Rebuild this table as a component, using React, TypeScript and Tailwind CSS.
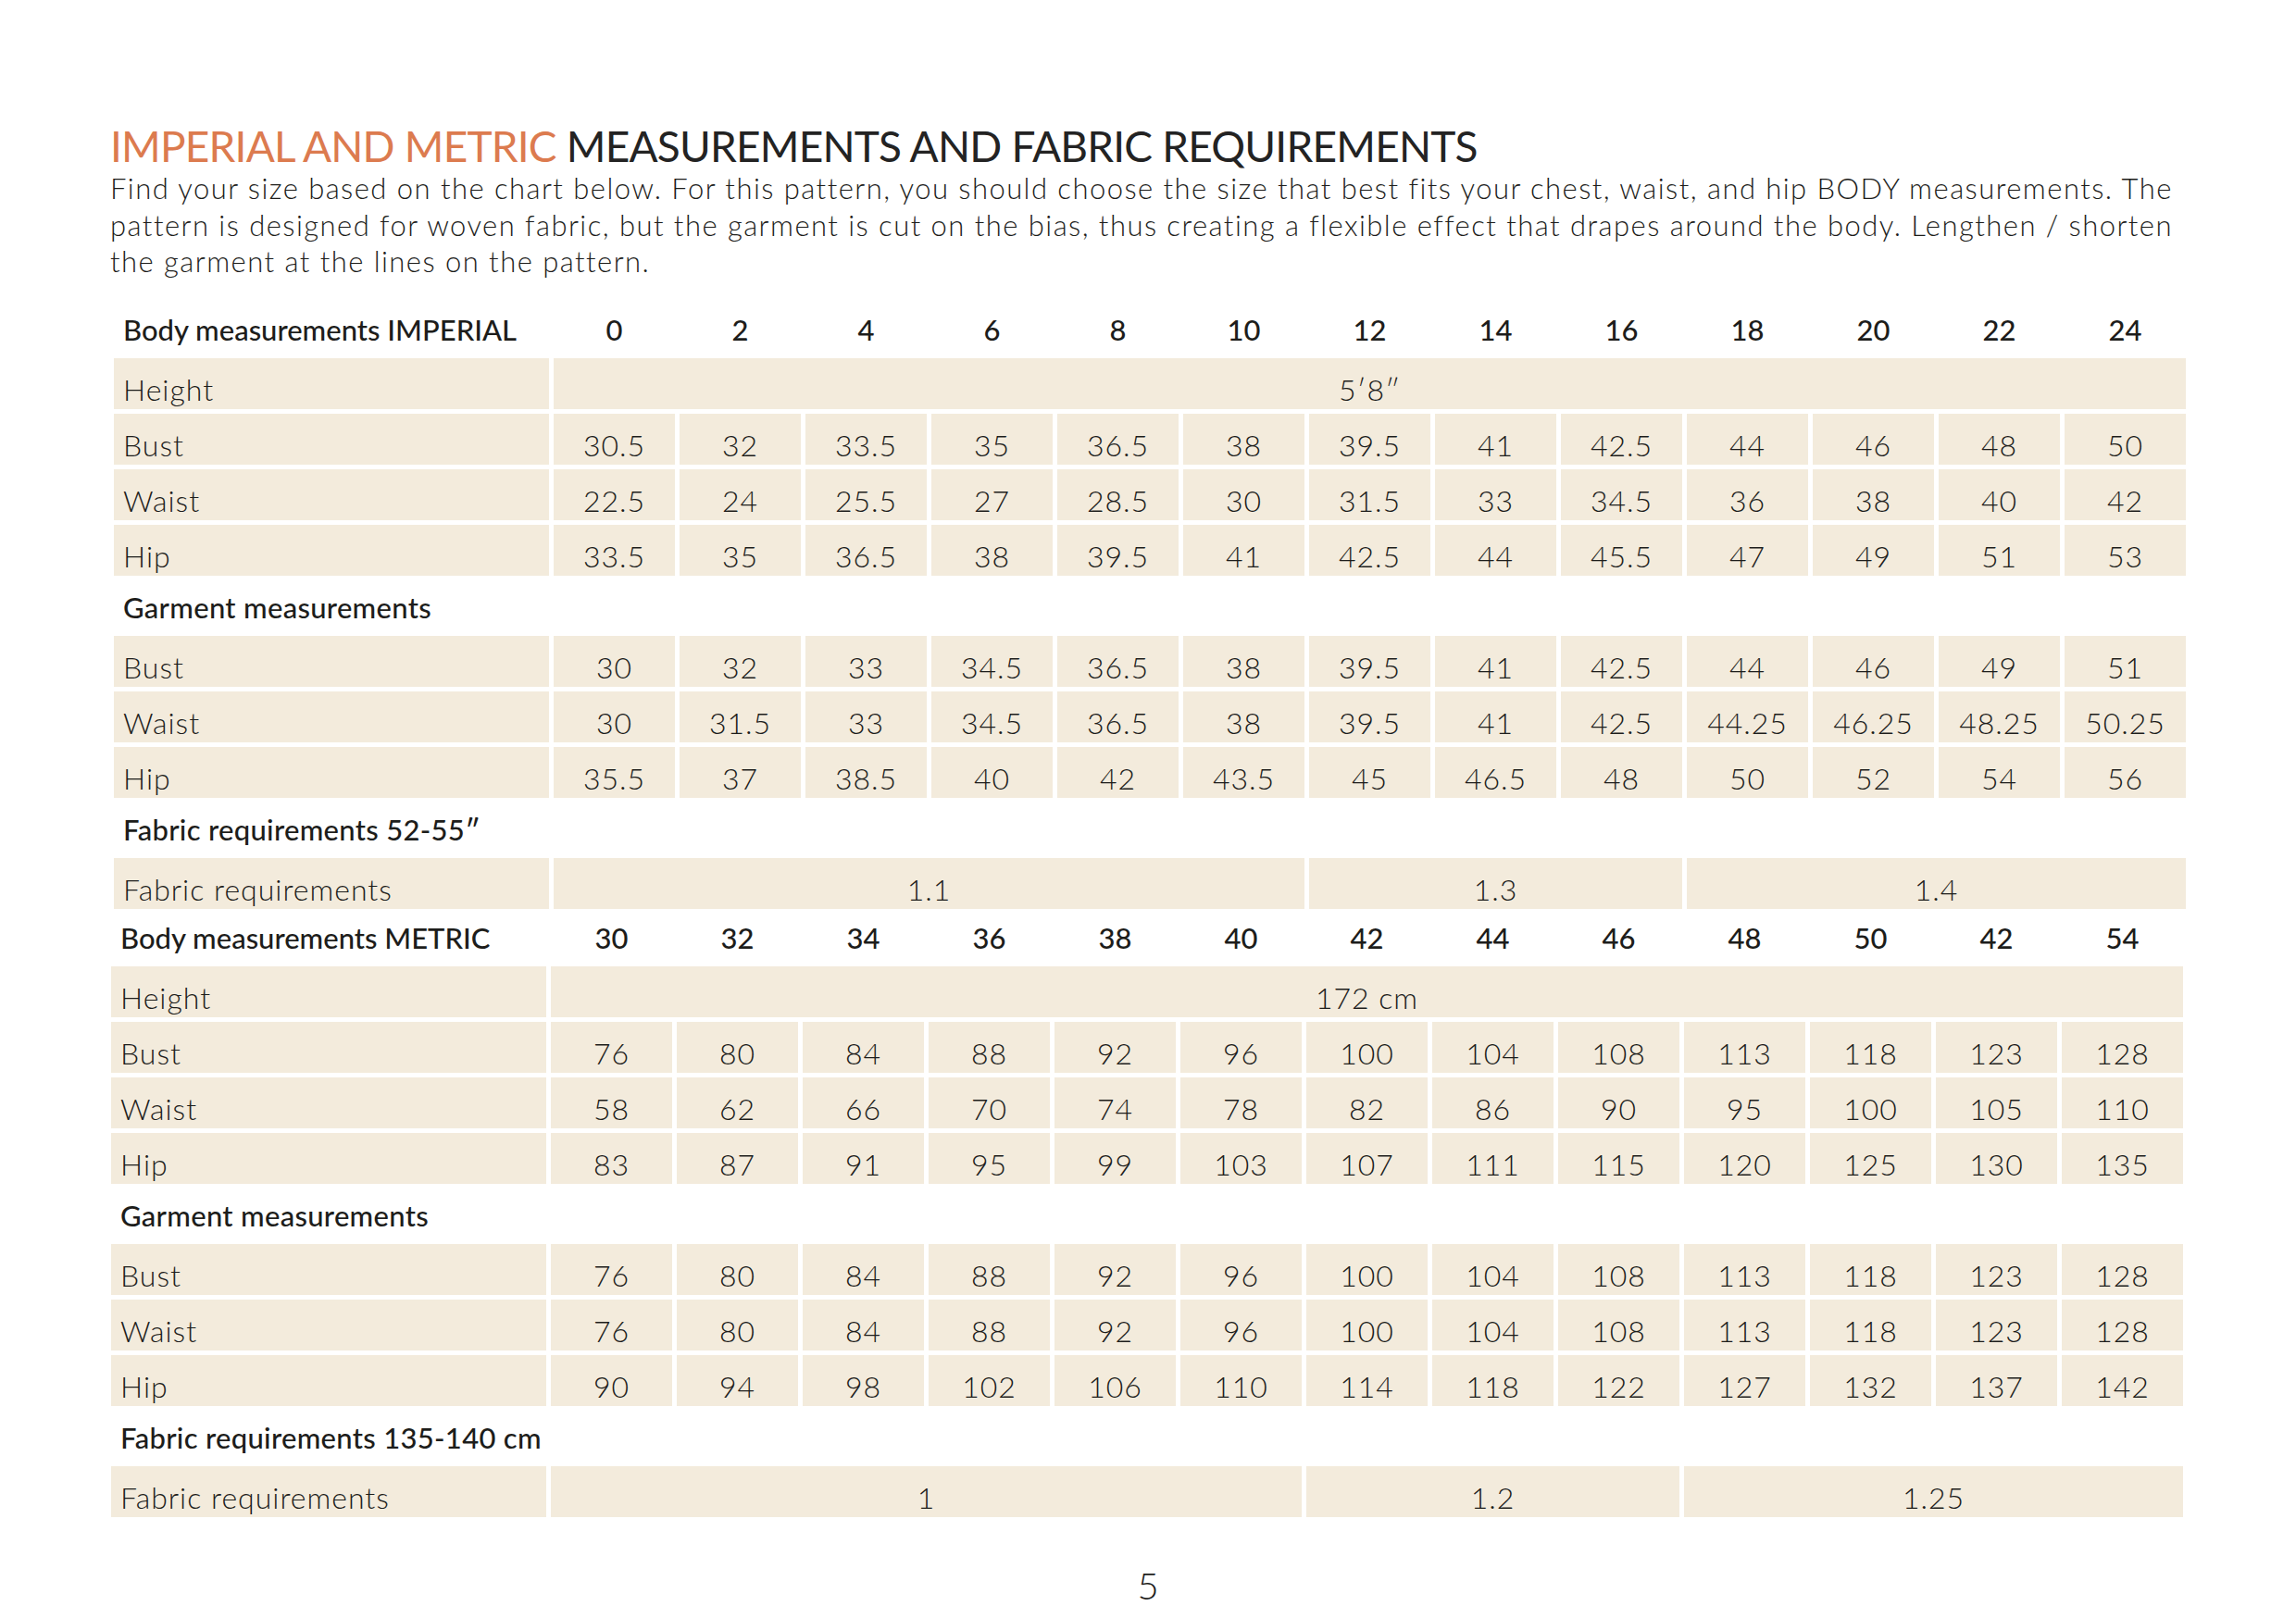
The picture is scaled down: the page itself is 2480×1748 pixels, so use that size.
const SIZES_IMP = ['0', '2', '4', '6', '8', '10', '12', '14', '16', '18', '20', '22', '24'];
const SIZES_MET = ['30', '32', '34', '36', '38', '40', '42', '44', '46', '48', '50', '42', '54'];

const imperial = {
  body: [
    ['Bust', ['30.5', '32', '33.5', '35', '36.5', '38', '39.5', '41', '42.5', '44', '46', '48', '50']],
    ['Waist', ['22.5', '24', '25.5', '27', '28.5', '30', '31.5', '33', '34.5', '36', '38', '40', '42']],
    ['Hip', ['33.5', '35', '36.5', '38', '39.5', '41', '42.5', '44', '45.5', '47', '49', '51', '53']],
  ] as [string, string[]][],
  garment: [
    ['Bust', ['30', '32', '33', '34.5', '36.5', '38', '39.5', '41', '42.5', '44', '46', '49', '51']],
    ['Waist', ['30', '31.5', '33', '34.5', '36.5', '38', '39.5', '41', '42.5', '44.25', '46.25', '48.25', '50.25']],
    ['Hip', ['35.5', '37', '38.5', '40', '42', '43.5', '45', '46.5', '48', '50', '52', '54', '56']],
  ] as [string, string[]][],
};

const metric = {
  body: [
    ['Bust', ['76', '80', '84', '88', '92', '96', '100', '104', '108', '113', '118', '123', '128']],
    ['Waist', ['58', '62', '66', '70', '74', '78', '82', '86', '90', '95', '100', '105', '110']],
    ['Hip', ['83', '87', '91', '95', '99', '103', '107', '111', '115', '120', '125', '130', '135']],
  ] as [string, string[]][],
  garment: [
    ['Bust', ['76', '80', '84', '88', '92', '96', '100', '104', '108', '113', '118', '123', '128']],
    ['Waist', ['76', '80', '84', '88', '92', '96', '100', '104', '108', '113', '118', '123', '128']],
    ['Hip', ['90', '94', '98', '102', '106', '110', '114', '118', '122', '127', '132', '137', '142']],
  ] as [string, string[]][],
};

const grid = 'grid grid-cols-[470px_repeat(13,131px)] gap-x-[5px]';
const cell = 'bg-[#f3ebdc] h-[55px] pt-[18px] text-[32px] leading-[32px] font-light tracking-[1px] whitespace-nowrap';

function HeaderRow({ title, sizes, tall = true }: { title: string; sizes: string[]; tall?: boolean }) {
  return (
    <div className={`${grid} ${tall ? 'h-[55px] pt-[14px]' : 'h-[52px] pt-[11px]'} text-[31px] leading-[31px] font-medium`}>
      <div className="pl-[10px] whitespace-nowrap">{title}</div>
      {sizes.map((s, i) => (
        <div key={i} className="text-center">{s}</div>
      ))}
    </div>
  );
}

function Heading({ children }: { children: React.ReactNode }) {
  return (
    <div className="h-[55px] pt-[14px] pl-[10px] text-[31px] leading-[31px] font-medium tracking-[0.3px] whitespace-nowrap">
      {children}
    </div>
  );
}

function DataRow({ label, values }: { label: string; values: string[] }) {
  return (
    <div className={grid}>
      <div className={`${cell} pl-[10px]`}>{label}</div>
      {values.map((v, i) => (
        <div key={i} className={`${cell} text-center`}>{v}</div>
      ))}
    </div>
  );
}

function SpanRow({ label, value }: { label: string; value: string }) {
  return (
    <div className={grid}>
      <div className={`${cell} pl-[10px]`}>{label}</div>
      <div className={`${cell} col-span-13 text-center`}>{value}</div>
    </div>
  );
}

function FabricRow({ values }: { values: [string, string, string] }) {
  return (
    <div className={grid}>
      <div className={`${cell} pl-[10px]`}>Fabric requirements</div>
      <div className={`${cell} col-span-6 text-center`}>{values[0]}</div>
      <div className={`${cell} col-span-3 text-center`}>{values[1]}</div>
      <div className={`${cell} col-span-4 text-center`}>{values[2]}</div>
    </div>
  );
}

export default function App() {
  return (
    <div className="w-[2480px] h-[1748px] bg-white text-[#1d1d1b] font-['Lato','Open_Sans',sans-serif] overflow-hidden">
      <div className="pl-[119px] pt-[135px]">
        <h1 className="text-[46px] leading-[46px] font-normal tracking-[-0.8px] whitespace-nowrap">
          <span className="text-[#dc7b4f]">IMPERIAL AND METRIC</span>{' '}
          <span className="text-[#232323]">MEASUREMENTS AND FABRIC REQUIREMENTS</span>
        </h1>
        <p className="mt-[3px] text-[31px] leading-[39.5px] font-light tracking-[1.45px] whitespace-nowrap">
          Find your size based on the chart below. For this pattern, you should choose the size that best fits your chest, waist, and hip BODY measurements. The
          <br />
          pattern is designed for woven fabric, but the garment is cut on the bias, thus creating a flexible effect that drapes around the body. Lengthen / shorten
          <br />
          the garment at the lines on the pattern.
        </p>
      </div>

      <div className="mt-[24px] pl-[123px] flex flex-col gap-y-[5px]">
        <HeaderRow title="Body measurements IMPERIAL" sizes={SIZES_IMP} />
        <SpanRow label="Height" value="5′8″" />
        {imperial.body.map(([l, v]) => (
          <DataRow key={l} label={l} values={v} />
        ))}
        <Heading>Garment measurements</Heading>
        {imperial.garment.map(([l, v]) => (
          <DataRow key={l} label={l} values={v} />
        ))}
        <Heading>Fabric requirements 52-55″</Heading>
        <FabricRow values={['1.1', '1.3', '1.4']} />
      </div>

      <div className="mt-[5px] pl-[120px] flex flex-col gap-y-[5px]">
        <HeaderRow title="Body measurements METRIC" sizes={SIZES_MET} tall={false} />
        <SpanRow label="Height" value="172 cm" />
        {metric.body.map(([l, v]) => (
          <DataRow key={l} label={l} values={v} />
        ))}
        <Heading>Garment measurements</Heading>
        {metric.garment.map(([l, v]) => (
          <DataRow key={l} label={l} values={v} />
        ))}
        <Heading>Fabric requirements 135-140 cm</Heading>
        <FabricRow values={['1', '1.2', '1.25']} />
      </div>

      <div className="mt-[54px] text-center text-[40px] leading-[40px] font-light">5</div>
    </div>
  );
}
